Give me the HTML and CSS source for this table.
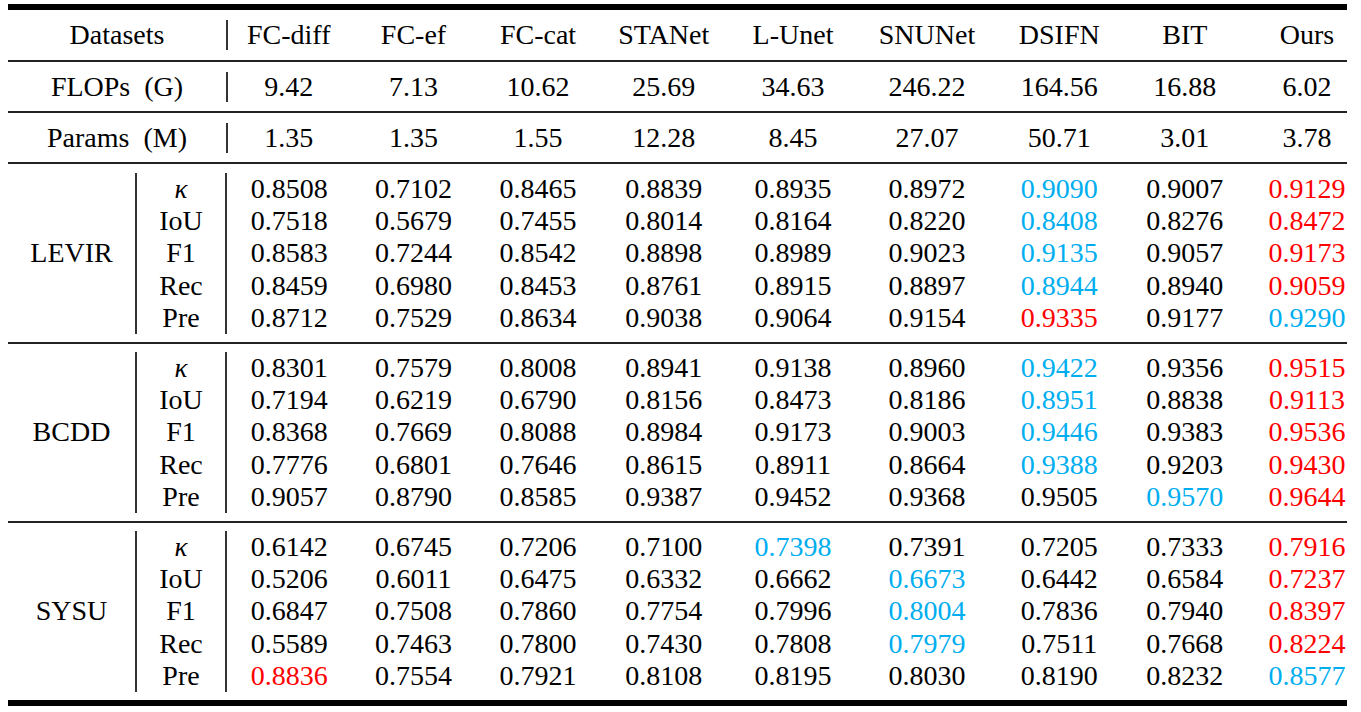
FILE: index.html
```html
<!DOCTYPE html>
<html>
<head>
<meta charset="utf-8">
<link rel="stylesheet" href="styles.css">
</head>
<body>
<table class="results">
  <colgroup>
    <col class="c-name"><col class="c-metric">
    <col class="c-d1"><col class="c-d2"><col class="c-d3"><col class="c-d4"><col class="c-d5">
    <col class="c-d6"><col class="c-d7"><col class="c-d8"><col class="c-d9">
  </colgroup>
  <thead>
    <tr class="head-row first">
      <th colspan="2">Datasets</th>
      <th class="bar">FC-diff</th><th>FC-ef</th><th>FC-cat</th><th>STANet</th><th>L-Unet</th>
      <th>SNUNet</th><th>DSIFN</th><th>BIT</th><th class="last">Ours</th>
    </tr>
    <tr class="head-row">
      <th colspan="2" class="label">FLOPs (G)</th>
      <td class="bar">9.42</td><td>7.13</td><td>10.62</td><td>25.69</td><td>34.63</td>
      <td>246.22</td><td>164.56</td><td>16.88</td><td class="last">6.02</td>
    </tr>
    <tr class="head-row">
      <th colspan="2" class="label">Params (M)</th>
      <td class="bar">1.35</td><td>1.35</td><td>1.55</td><td>12.28</td><td>8.45</td>
      <td>27.07</td><td>50.71</td><td>3.01</td><td class="last">3.78</td>
    </tr>
  </thead>
  <tbody>
    <tr class="gap top"><td colspan="11"></td></tr>
    <tr>
      <th rowspan="5" class="ds">LEVIR</th><td class="metric"><i>κ</i></td>
      <td>0.8508</td><td>0.7102</td><td>0.8465</td><td>0.8839</td><td>0.8935</td><td>0.8972</td><td class="blue">0.9090</td><td>0.9007</td><td class="last red">0.9129</td>
    </tr>
    <tr><td class="metric">IoU</td><td>0.7518</td><td>0.5679</td><td>0.7455</td><td>0.8014</td><td>0.8164</td><td>0.8220</td><td class="blue">0.8408</td><td>0.8276</td><td class="last red">0.8472</td></tr>
    <tr><td class="metric">F1</td><td>0.8583</td><td>0.7244</td><td>0.8542</td><td>0.8898</td><td>0.8989</td><td>0.9023</td><td class="blue">0.9135</td><td>0.9057</td><td class="last red">0.9173</td></tr>
    <tr><td class="metric">Rec</td><td>0.8459</td><td>0.6980</td><td>0.8453</td><td>0.8761</td><td>0.8915</td><td>0.8897</td><td class="blue">0.8944</td><td>0.8940</td><td class="last red">0.9059</td></tr>
    <tr><td class="metric">Pre</td><td>0.8712</td><td>0.7529</td><td>0.8634</td><td>0.9038</td><td>0.9064</td><td>0.9154</td><td class="red">0.9335</td><td>0.9177</td><td class="last blue">0.9290</td></tr>
    <tr class="gap"><td colspan="11"></td></tr>
  </tbody>
  <tbody>
    <tr class="gap sep"><td colspan="11"></td></tr>
    <tr>
      <th rowspan="5" class="ds">BCDD</th><td class="metric"><i>κ</i></td>
      <td>0.8301</td><td>0.7579</td><td>0.8008</td><td>0.8941</td><td>0.9138</td><td>0.8960</td><td class="blue">0.9422</td><td>0.9356</td><td class="last red">0.9515</td>
    </tr>
    <tr><td class="metric">IoU</td><td>0.7194</td><td>0.6219</td><td>0.6790</td><td>0.8156</td><td>0.8473</td><td>0.8186</td><td class="blue">0.8951</td><td>0.8838</td><td class="last red">0.9113</td></tr>
    <tr><td class="metric">F1</td><td>0.8368</td><td>0.7669</td><td>0.8088</td><td>0.8984</td><td>0.9173</td><td>0.9003</td><td class="blue">0.9446</td><td>0.9383</td><td class="last red">0.9536</td></tr>
    <tr><td class="metric">Rec</td><td>0.7776</td><td>0.6801</td><td>0.7646</td><td>0.8615</td><td>0.8911</td><td>0.8664</td><td class="blue">0.9388</td><td>0.9203</td><td class="last red">0.9430</td></tr>
    <tr><td class="metric">Pre</td><td>0.9057</td><td>0.8790</td><td>0.8585</td><td>0.9387</td><td>0.9452</td><td>0.9368</td><td>0.9505</td><td class="blue">0.9570</td><td class="last red">0.9644</td></tr>
    <tr class="gap"><td colspan="11"></td></tr>
  </tbody>
  <tbody>
    <tr class="gap sep"><td colspan="11"></td></tr>
    <tr>
      <th rowspan="5" class="ds">SYSU</th><td class="metric"><i>κ</i></td>
      <td>0.6142</td><td>0.6745</td><td>0.7206</td><td>0.7100</td><td class="blue">0.7398</td><td>0.7391</td><td>0.7205</td><td>0.7333</td><td class="last red">0.7916</td>
    </tr>
    <tr><td class="metric">IoU</td><td>0.5206</td><td>0.6011</td><td>0.6475</td><td>0.6332</td><td>0.6662</td><td class="blue">0.6673</td><td>0.6442</td><td>0.6584</td><td class="last red">0.7237</td></tr>
    <tr><td class="metric">F1</td><td>0.6847</td><td>0.7508</td><td>0.7860</td><td>0.7754</td><td>0.7996</td><td class="blue">0.8004</td><td>0.7836</td><td>0.7940</td><td class="last red">0.8397</td></tr>
    <tr><td class="metric">Rec</td><td>0.5589</td><td>0.7463</td><td>0.7800</td><td>0.7430</td><td>0.7808</td><td class="blue">0.7979</td><td>0.7511</td><td>0.7668</td><td class="last red">0.8224</td></tr>
    <tr><td class="metric">Pre</td><td class="red">0.8836</td><td>0.7554</td><td>0.7921</td><td>0.8108</td><td>0.8195</td><td>0.8030</td><td>0.8190</td><td>0.8232</td><td class="last blue">0.8577</td></tr>
    <tr class="gap"><td colspan="11"></td></tr>
  </tbody>
</table>
</body>
</html>
```

FILE: styles.css
```css
html, body {
  margin: 0;
  padding: 0;
  background: #ffffff;
}

body {
  padding: 4px 0 0 8px;
  font-family: "Liberation Serif", "Times New Roman", serif;
  font-size: 28px;
  color: #000000;
}

.results {
  width: 1339px;
  table-layout: fixed;
  border-collapse: collapse;
  border-spacing: 0;
  border-top: 6px solid #000;
  border-bottom: 6px solid #000;
  font-family: "Liberation Serif", "Times New Roman", serif;
}

.c-name { width: 128px; }
.c-metric { width: 90px; }
.c-d1 { width: 125.5px; }
.c-d2 { width: 124px; }
.c-d3 { width: 125px; }
.c-d4 { width: 126.5px; }
.c-d5 { width: 132px; }
.c-d6 { width: 136px; }
.c-d7 { width: 128.5px; }
.c-d8 { width: 122.5px; }
.c-d9 { width: 101px; }

.results th,
.results td {
  padding: 0;
  text-align: center;
  font-weight: normal;
  white-space: nowrap;
  font-family: inherit;
}

.results td.last,
.results th.last {
  padding-left: 21px;
}

.head-row th,
.head-row td {
  height: 49px;
  border-bottom: 2px solid #222;
}

.head-row.first th {
  height: 50px;
}

.head-row .label {
  word-spacing: 7px;
}

.head-row .bar {
  background: linear-gradient(#333, #333) no-repeat left center / 2px 30px;
}

tbody tr td,
tbody tr th {
  height: 32.2px;
  line-height: 32px;
}

tr.gap td {
  height: 8px;
  line-height: 0;
  font-size: 0;
}

tr.gap.top td {
  height: 9px;
}

tr.sep td {
  border-top: 2px solid #222;
}

.ds {
  border-right: 2px solid #333;
  vertical-align: middle;
}

.metric {
  border-right: 2px solid #333;
}

.metric i {
  font-style: italic;
  font-size: 27px;
}

.red { color: #ff0000; }
.blue { color: #00aeef; }
```
